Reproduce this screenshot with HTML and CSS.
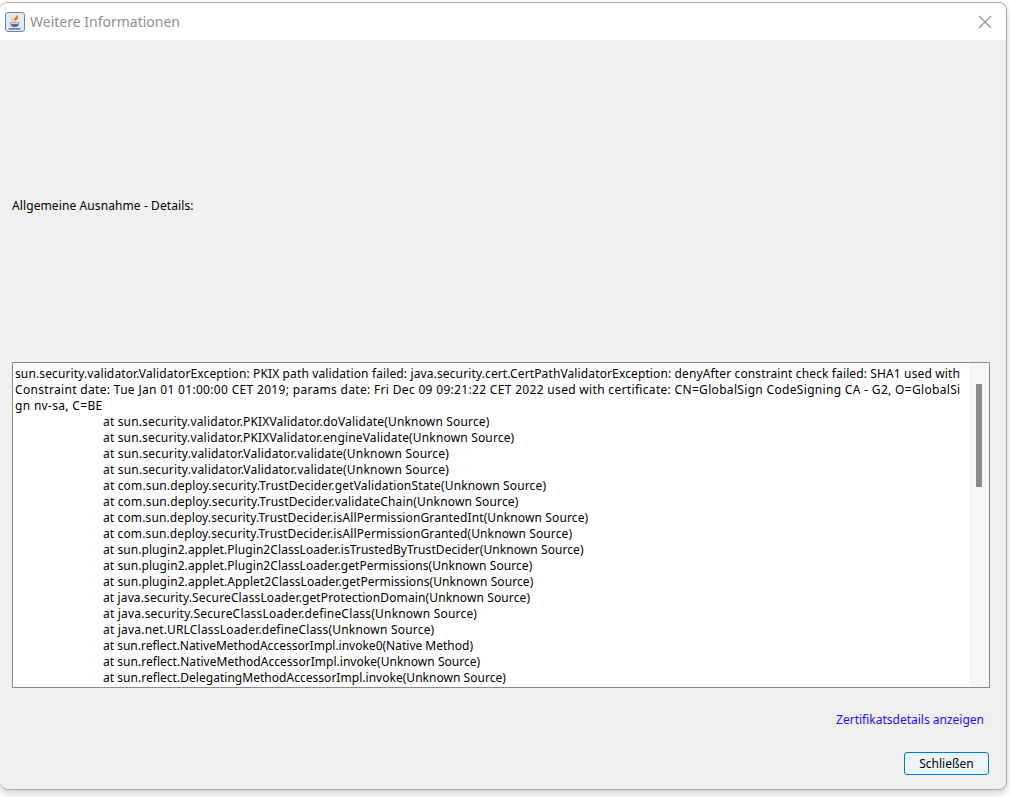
FILE: index.html
```html
<!DOCTYPE html>
<html lang="de">
<head>
<meta charset="utf-8">
<title>Weitere Informationen</title>
<link rel="stylesheet" href="styles.css">
</head>
<body>
<div class="window">
  <header class="titlebar">
    <span class="app-icon">
      <svg viewBox="0 0 20 20" width="20" height="20">
        <rect x="0.5" y="0.5" width="19" height="19" rx="2.5" fill="#e3e9f0" stroke="#71859a"/>
        <path d="M11.500 2.500c1 2-2.800 3.200-2.300 5.300.2.800.8 1.300 1.300 1.700-.1-1.300 3.300-2.400 2.600-4.500-.3-1-.9-1.900-1.600-2.500z" fill="#e8741a"/>
        <path d="M8 5.500C6.500 6.500 6.300 8 7.500 9.500" stroke="#f0a060" stroke-width="1" fill="none"/>
        <path d="M5 10.500h9.500l-.6 1.500c-.4 2-1.600 3-2.900 3H8.500C7 15 6 14 5.600 12z" fill="#5a6f84"/>
        <path d="M6 11.500h7.500" stroke="#dfe7ef" stroke-width=".9"/>
        <path d="M3.500 16.800h12" stroke="#46627e" stroke-width="1.200"/>
      </svg>
    </span>
    <span class="title">Weitere Informationen</span>
    <svg class="close" viewBox="0 0 14 14" width="14" height="14">
      <path d="M1 1l12 12M13 1L1 13" stroke="#8f8f8f" stroke-width="1.100" fill="none"/>
    </svg>
  </header>
  <main class="body">
    <div class="label-area"><span class="label">Allgemeine Ausnahme - Details:</span></div>
    <section class="details">
      <div class="log">
        <div class="ls-2">sun.security.validator.ValidatorException: PKIX path validation failed: java.security.cert.CertPathValidatorException: denyAfter constraint check failed: SHA1 used with</div>
        <div class="ls-5">Constraint date: Tue Jan 01 01:00:00 CET 2019; params date: Fri Dec 09 09:21:22 CET 2022 used with certificate: CN=GlobalSign CodeSigning CA - G2, O=GlobalSi</div>
        <div class="ls-5">gn nv-sa, C=BE</div>
        <div class="at ls-3">at sun.security.validator.PKIXValidator.doValidate(Unknown Source)</div>
        <div class="at ls-3">at sun.security.validator.PKIXValidator.engineValidate(Unknown Source)</div>
        <div class="at ls-4">at sun.security.validator.Validator.validate(Unknown Source)</div>
        <div class="at ls-4">at sun.security.validator.Validator.validate(Unknown Source)</div>
        <div class="at ls-3">at com.sun.deploy.security.TrustDecider.getValidationState(Unknown Source)</div>
        <div class="at ls-3">at com.sun.deploy.security.TrustDecider.validateChain(Unknown Source)</div>
        <div class="at ls-2">at com.sun.deploy.security.TrustDecider.isAllPermissionGrantedInt(Unknown Source)</div>
        <div class="at ls-2">at com.sun.deploy.security.TrustDecider.isAllPermissionGranted(Unknown Source)</div>
        <div class="at ls-1">at sun.plugin2.applet.Plugin2ClassLoader.isTrustedByTrustDecider(Unknown Source)</div>
        <div class="at ls-1">at sun.plugin2.applet.Plugin2ClassLoader.getPermissions(Unknown Source)</div>
        <div class="at ls-1">at sun.plugin2.applet.Applet2ClassLoader.getPermissions(Unknown Source)</div>
        <div class="at ls-2">at java.security.SecureClassLoader.getProtectionDomain(Unknown Source)</div>
        <div class="at ls-4">at java.security.SecureClassLoader.defineClass(Unknown Source)</div>
        <div class="at ls-4">at java.net.URLClassLoader.defineClass(Unknown Source)</div>
        <div class="at">at sun.reflect.NativeMethodAccessorImpl.invoke0(Native Method)</div>
        <div class="at ls-0">at sun.reflect.NativeMethodAccessorImpl.invoke(Unknown Source)</div>
        <div class="at ls-0">at sun.reflect.DelegatingMethodAccessorImpl.invoke(Unknown Source)</div>
      </div>
      <div class="scrollbar"><div class="thumb"></div></div>
    </section>
    <div class="link-row"><a class="link" href="#">Zertifikatsdetails anzeigen</a></div>
    <div class="button-row"><button class="btn" type="button">Schließen</button></div>
  </main>
</div>
</body>
</html>
```
FILE: styles.css
```css
* { box-sizing: border-box; }
html, body { margin: 0; height: 797px; overflow: hidden; }
body {
  background: #fff;
  padding: 2px 3px 7px 0;
  font-family: "Noto Sans", "DejaVu Sans", sans-serif;
  font-size: 12px;
  color: #000;
}
.window {
  height: 100%;
  display: flex;
  flex-direction: column;
  background: #f0f0f0;
  border: 1px solid #a9a9a9;
  border-left: 0;
  border-radius: 8px;
  overflow: hidden;
  box-shadow: 0 4px 8px rgba(0,0,0,.18);
}
.titlebar {
  flex: 0 0 37px;
  display: flex;
  align-items: center;
  background: #fff;
  padding: 0 14px 0 5px;
}
.app-icon { display: flex; margin-right: 5px; }
.title { font-size: 14px; color: #8f8f8f; flex: 1; }
.close { display: block; }
.body {
  flex: 1;
  display: flex;
  flex-direction: column;
  padding: 0 16px 15px 12px;
  min-height: 0;
}
.label-area {
  flex: 0 0 322px;
  display: flex;
  align-items: center;
  padding-top: 8px;
}
.label { letter-spacing: .1px; }
.details {
  flex: 0 0 326px;
  display: flex;
  border: 1px solid #8a8a8e;
  background: #fff;
  overflow: hidden;
}
.log {
  flex: 1;
  min-width: 0;
  padding: 3px 0 0 2px;
  line-height: 16px;
  white-space: nowrap;
  overflow: hidden;
}
.at { padding-left: 88px; }
.ls-0 { letter-spacing: .03px; }
.ls-1 { letter-spacing: .07px; }
.ls-2 { letter-spacing: .125px; }
.ls-3 { letter-spacing: .16px; }
.ls-4 { letter-spacing: .2px; }
.ls-5 { letter-spacing: .32px; }
.scrollbar {
  flex: 0 0 20px;
  background: #f6f6f6;
  padding: 21px 7px 0 7px;
}
.thumb { height: 103px; background: #8a8a8a; }
.link-row {
  display: flex;
  justify-content: flex-end;
  padding: 24px 6px 0 0;
  line-height: 16px;
}
.link { color: #1a0dff; text-decoration: none; }
.button-row {
  display: flex;
  justify-content: flex-end;
  margin-top: 24px;
  padding-right: 1px;
}
.btn {
  width: 85px;
  height: 23px;
  border: 1px solid #0078d4;
  border-radius: 3px;
  background: #edf4fb;
  font: inherit;
  color: #000;
  padding: 0;
}
```
